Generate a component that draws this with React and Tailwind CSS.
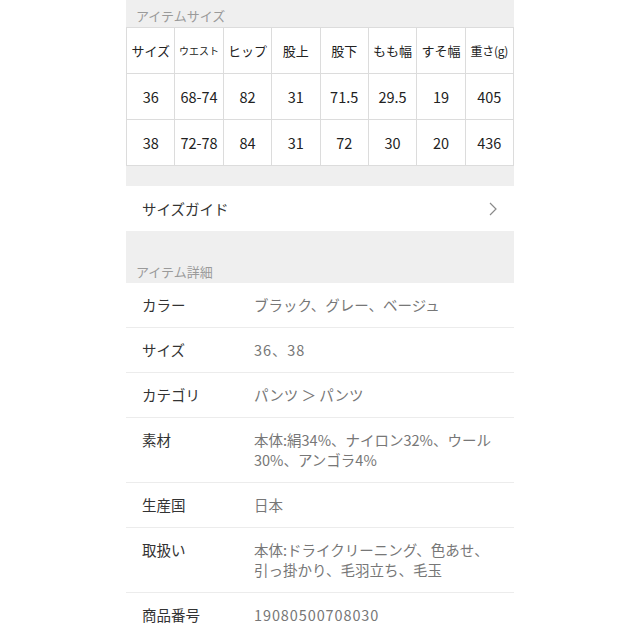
const font = { fontFamily: '"Noto Sans CJK JP", "Noto Sans", sans-serif' };

const head = ["サイズ", "ウエスト", "ヒップ", "股上", "股下", "もも幅", "すそ幅", "重さ(g)"];
const rows = [
  ["36", "68-74", "82", "31", "71.5", "29.5", "19", "405"],
  ["38", "72-78", "84", "31", "72", "30", "20", "436"],
];

const details = [
  ["カラー", ["ブラック、グレー、ベージュ"]],
  ["サイズ", ["36、38"], true],
  ["カテゴリ", ["パンツ ＞ パンツ"]],
  ["素材", ["本体:絹34%、ナイロン32%、ウール", "30%、アンゴラ4%"]],
  ["生産国", ["日本"]],
  ["取扱い", ["本体:ドライクリーニング、色あせ、", "引っ掛かり、毛羽立ち、毛玉"]],
  ["商品番号", ["19080500708030"], true],
];

export default function App() {
  return (
    <div className="min-h-[640px] w-[640px] bg-white" style={font}>
      <div className="mx-auto h-[640px] w-[388px] overflow-hidden">
        <div className="flex h-[27px] items-end bg-[#efefef] pb-[2px] pl-[10px] text-[13px] leading-[18px] text-[#9a9a9a]">
          アイテムサイズ
        </div>

        <div className="grid grid-cols-8 border-l border-t border-[#dcdcdc]">
          {head.map((h, i) => (
            <div
              key={h}
              className={
                "flex h-[46px] items-center justify-center whitespace-nowrap border-b border-r border-[#dcdcdc] text-[#222] " +
                (i === 1 ? "text-[10px]" : i === 7 ? "text-[12px] tracking-[-0.3px]" : "text-[13px]")
              }
            >
              {h}
            </div>
          ))}
          {rows.flat().map((v, i) => (
            <div
              key={i}
              className="flex h-[46px] items-center justify-center border-b border-r border-[#dcdcdc] text-[14.5px] text-[#222]"
            >
              {v}
            </div>
          ))}
        </div>

        <div className="h-[20px] bg-[#efefef]" />

        <div className="flex h-[45px] items-center justify-between pl-4 pr-[17px] text-[14.5px] text-[#333]">
          <span>サイズガイド</span>
          <svg width="8" height="14" viewBox="0 0 8 14" fill="none">
            <path d="M1 1l6 6-6 6" stroke="#8a8a8a" strokeWidth="1.2" />
          </svg>
        </div>

        <div className="flex h-[52px] items-end bg-[#efefef] pb-[2px] pl-[10px] text-[13px] leading-[18px] text-[#9a9a9a]">
          アイテム詳細
        </div>

        {details.map(([label, lines, num], i) => (
          <div
            key={label}
            className={
              "flex py-3 text-[14.5px] leading-[20px] " +
              (i < details.length - 1 ? "border-b border-[#ececec]" : "")
            }
          >
            <div className="w-[128px] shrink-0 pl-4 text-[#333]">{label}</div>
            <div className={"text-[#777] " + (num ? "tracking-[0.9px]" : "")}>
              {lines.map((l) => (
                <div key={l}>{l}</div>
              ))}
            </div>
          </div>
        ))}
      </div>
    </div>
  );
}
